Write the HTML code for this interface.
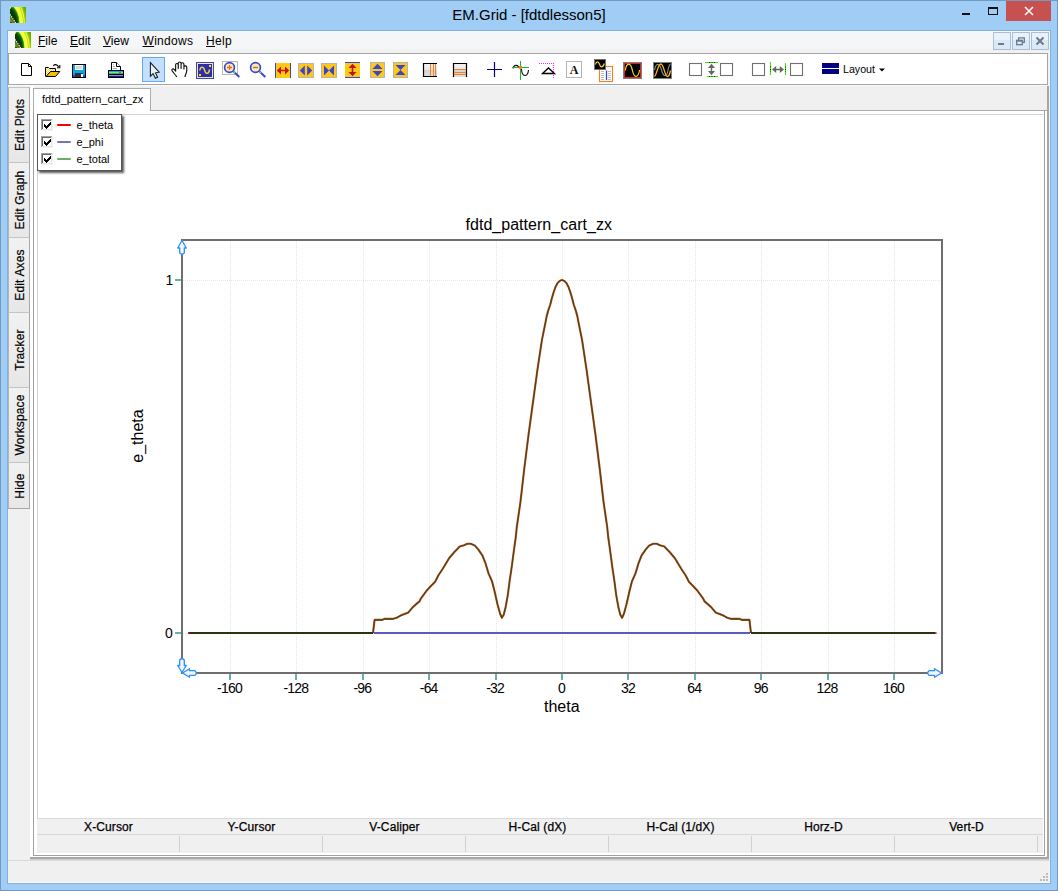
<!DOCTYPE html>
<html><head><meta charset="utf-8"><title>EM.Grid - [fdtdlesson5]</title>
<style>
*{box-sizing:border-box;margin:0;padding:0}
html,body{width:1058px;height:891px;overflow:hidden}
body{position:relative;background:#9fcdf5;font-family:"Liberation Sans",sans-serif;color:#000}
.abs{position:absolute}
#frame{left:0;top:0;width:1058px;height:891px;border:1px solid #7499be}
#client{left:7px;top:30px;width:1044px;height:854px;border:1px solid #84b1dc;background:#f0f0f0;box-shadow:inset -1px -1px 0 #f8f7f5}
#title{left:0;top:5px;width:1058px;text-align:center;font-size:15px;line-height:20px;color:#000}
#menubar{left:8px;top:31px;width:1042px;height:19px;background:linear-gradient(#f5f6f7 0,#f5f6f7 17px,#f0f0f0 19px)}
.mi{position:absolute;top:33px;font-size:12px;line-height:16px;color:#000;white-space:nowrap}
.mi u{text-decoration:underline;text-decoration-thickness:1px;text-underline-offset:.5px}
#toolbar{left:8px;top:53px;width:1040px;height:32px;background:#fff;border:1px solid #a6a6a6}
.ltab{position:absolute;left:8px;width:22px;border:1px solid #a8a8a8;border-top-color:#c4c4c4;border-left-color:#b4b4b4;background:linear-gradient(#f1f1f1,#e7e7e7)}
.ltab span{position:absolute;left:calc(50% + 1px);top:50%;white-space:nowrap;font-size:12px;line-height:14px;transform:translate(-50%,-50%) rotate(-90deg);color:#000;letter-spacing:.15px;-webkit-text-stroke:.2px #000}
#tab{letter-spacing:.05px;left:33px;top:88px;width:118px;height:23px;background:#fff;border:1px solid #acacac;border-bottom:none;font-size:11px;line-height:13px;padding:4px 0 0 8px;white-space:nowrap;color:#000}
#page{left:30px;top:110px;width:1017px;height:747px;background:#fff;box-shadow:inset 0 1px 0 #acacac}
#panel{left:33px;top:110px;width:1012px;height:746px;border:1px solid #a0a0a0;border-top:none}
#inner{left:37px;top:114px;width:1006px;height:704px;border-left:1px solid #d4d4d4;border-top:1px solid #d4d4d4}
#status{left:37px;top:818px;width:1006px;height:35px;background:#f0f0f0;border-top:1px solid #dadada}
#status .h{position:absolute;top:0;height:16px;width:143px;text-align:center;font-size:12px;line-height:16px;color:#000;letter-spacing:.12px;-webkit-text-stroke:.25px #000}
#status .sep{position:absolute;top:17px;height:16px;width:1px;background:#d0d0d0}
#status .ln{position:absolute;left:0;top:15px;width:1006px;height:1px;background:#d8d8d8}
#legend{left:37px;top:114px;width:85px;height:57px;background:#fff;border:1px solid #555;box-shadow:2px 2px 2px rgba(0,0,0,.65)}

.lg{position:absolute;left:38.5px;margin-top:1px;font-size:11px;line-height:13px;color:#000;white-space:nowrap}
.tick{position:absolute;font-size:14px;letter-spacing:-.8px;line-height:14px;color:#000;white-space:nowrap;text-align:center;width:60px}
.big{position:absolute;font-size:16px;line-height:18px;color:#000;white-space:nowrap}
</style></head><body>
<div class="abs" id="frame"></div>
<div class="abs" id="title">EM.Grid - [fdtdlesson5]</div>
<div class="abs" id="client"></div>
<div class="abs" id="menubar"></div>
<div class="mi" style="left:38px"><u>F</u>ile</div>
<div class="mi" style="left:70px"><u>E</u>dit</div>
<div class="mi" style="left:103px"><u>V</u>iew</div>
<div class="mi" style="left:142.5px;letter-spacing:.3px"><u>W</u>indows</div>
<div class="mi" style="left:206px;letter-spacing:.3px"><u>H</u>elp</div>
<div class="abs" id="toolbar"></div>
<!--LEFTTABS--><div class="ltab" style="top:87px;height:76px"><span>Edit Plots</span></div><div class="ltab" style="top:162px;height:76px"><span>Edit Graph</span></div><div class="ltab" style="top:237px;height:76px"><span>Edit Axes</span></div><div class="ltab" style="top:312px;height:76px"><span>Tracker</span></div><div class="ltab" style="top:387px;height:76px"><span>Workspace</span></div><div class="ltab" style="top:462px;height:47px"><span>Hide</span></div><!--/LEFTTABS-->
<div class="abs" id="page"></div><div class="abs" style="left:30px;top:86px;width:4px;height:25px;background:#fff"></div>
<div class="abs" id="panel"></div>
<div class="abs" id="inner"></div>
<div class="abs" id="tab">fdtd_pattern_cart_zx</div>
<div class="abs" id="status">
<div class="ln"></div>
<div class="h" style="left:0">X-Cursor</div><div class="h" style="left:143px">Y-Cursor</div><div class="h" style="left:286px">V-Caliper</div><div class="h" style="left:429px">H-Cal (dX)</div><div class="h" style="left:572px">H-Cal (1/dX)</div><div class="h" style="left:715px">Horz-D</div><div class="h" style="left:858px">Vert-D</div>
<div class="sep" style="left:142px"></div><div class="sep" style="left:285px"></div><div class="sep" style="left:428px"></div><div class="sep" style="left:571px"></div><div class="sep" style="left:714px"></div><div class="sep" style="left:857px"></div><div class="sep" style="left:1000px"></div>
</div>
<!--PLOT--><svg class="abs" style="left:0;top:0" width="1058" height="891" viewBox="0 0 1058 891"><g stroke="#e6e6e6" stroke-width="1" stroke-dasharray="1,1" shape-rendering="crispEdges"><line x1="230.5" y1="241" x2="230.5" y2="672"/><line x1="296.5" y1="241" x2="296.5" y2="672"/><line x1="363.5" y1="241" x2="363.5" y2="672"/><line x1="429.5" y1="241" x2="429.5" y2="672"/><line x1="496.5" y1="241" x2="496.5" y2="672"/><line x1="562.5" y1="241" x2="562.5" y2="672"/><line x1="628.5" y1="241" x2="628.5" y2="672"/><line x1="695.5" y1="241" x2="695.5" y2="672"/><line x1="761.5" y1="241" x2="761.5" y2="672"/><line x1="828.5" y1="241" x2="828.5" y2="672"/><line x1="894.5" y1="241" x2="894.5" y2="672"/><line x1="183" y1="280.5" x2="941" y2="280.5"/><line x1="183" y1="633.5" x2="941" y2="633.5"/></g><g fill="#68b1ab" shape-rendering="crispEdges"><rect x="229" y="674" width="2" height="6"/><rect x="295" y="674" width="2" height="6"/><rect x="362" y="674" width="2" height="6"/><rect x="428" y="674" width="2" height="6"/><rect x="495" y="674" width="2" height="6"/><rect x="561" y="674" width="2" height="6"/><rect x="627" y="674" width="2" height="6"/><rect x="694" y="674" width="2" height="6"/><rect x="760" y="674" width="2" height="6"/><rect x="827" y="674" width="2" height="6"/><rect x="893" y="674" width="2" height="6"/><rect x="175" y="279" width="6" height="2"/><rect x="175" y="632" width="6" height="2"/></g><g fill="#6e6e6e" shape-rendering="crispEdges"><rect x="181" y="239" width="762" height="2"/><rect x="181" y="672" width="762" height="2"/><rect x="181" y="239" width="2" height="435"/><rect x="941" y="239" width="2" height="435"/></g><g fill="none" stroke-linejoin="round" stroke-linecap="butt"><polyline points="374,633 750,633" stroke="#5a5abf" stroke-width="2.2"/><polyline points="373.0,633.0 374.6,619.9 382.5,619.9 384.1,618.9 392.7,618.9 396.6,617.8 401.3,615.2 408.4,612.4 413.1,606.9 419.4,601.4 421.0,598.3 426.5,590.8 431.2,585.7 435.1,581.8 438.3,575.5 442.6,569.0 449.1,558.2 454.2,552.2 459.7,546.6 463.3,545.6 467.3,543.8 470.8,543.8 474.9,545.6 478.4,549.6 482.5,555.7 485.5,563.3 488.5,573.4 492.1,581.5 494.6,591.6 497.6,604.7 500.1,613.8 501.9,617.8 503.7,614.8 505.7,606.7 507.7,595.6 509.7,580.4 511.8,566.3 513.8,551.2 515.8,537.0 516.8,527.0 520.5,501.6 524.3,468.5 528.7,433.5 533.1,401.4 537.5,369.3 541.9,340.1 545.2,323.9 546.7,316.1 548.2,310.6 550.3,304.5 551.8,298.5 553.6,292.4 555.5,287.0 557.6,282.9 559.7,280.9 562.0,279.9 564.3,280.9 566.4,282.9 568.5,287.0 570.4,292.4 572.2,298.5 573.7,304.5 575.8,310.6 577.3,316.1 578.8,323.9 582.1,340.1 586.5,369.3 590.9,401.4 595.3,433.5 599.7,468.5 603.5,501.6 607.2,527.0 608.2,537.0 610.2,551.2 612.2,566.3 614.3,580.4 616.3,595.6 618.3,606.7 620.3,614.8 622.1,617.8 623.9,613.8 626.4,604.7 629.4,591.6 631.9,581.5 635.5,573.4 638.5,563.3 641.5,555.7 645.6,549.6 649.1,545.6 653.2,543.8 656.7,543.8 660.7,545.6 664.3,546.6 669.8,552.2 674.9,558.2 681.4,569.0 685.7,575.5 688.9,581.8 692.8,585.7 697.5,590.8 703.0,598.3 704.6,601.4 710.9,606.9 715.6,612.4 722.7,615.2 727.4,617.8 731.3,618.9 739.9,618.9 741.5,619.9 749.4,619.9 751.0,633.0" stroke="#ff0808" stroke-width="2.1" opacity=".85"/><polyline points="373.0,633.0 374.6,619.9 382.5,619.9 384.1,618.9 392.7,618.9 396.6,617.8 401.3,615.2 408.4,612.4 413.1,606.9 419.4,601.4 421.0,598.3 426.5,590.8 431.2,585.7 435.1,581.8 438.3,575.5 442.6,569.0 449.1,558.2 454.2,552.2 459.7,546.6 463.3,545.6 467.3,543.8 470.8,543.8 474.9,545.6 478.4,549.6 482.5,555.7 485.5,563.3 488.5,573.4 492.1,581.5 494.6,591.6 497.6,604.7 500.1,613.8 501.9,617.8 503.7,614.8 505.7,606.7 507.7,595.6 509.7,580.4 511.8,566.3 513.8,551.2 515.8,537.0 516.8,527.0 520.5,501.6 524.3,468.5 528.7,433.5 533.1,401.4 537.5,369.3 541.9,340.1 545.2,323.9 546.7,316.1 548.2,310.6 550.3,304.5 551.8,298.5 553.6,292.4 555.5,287.0 557.6,282.9 559.7,280.9 562.0,279.9 564.3,280.9 566.4,282.9 568.5,287.0 570.4,292.4 572.2,298.5 573.7,304.5 575.8,310.6 577.3,316.1 578.8,323.9 582.1,340.1 586.5,369.3 590.9,401.4 595.3,433.5 599.7,468.5 603.5,501.6 607.2,527.0 608.2,537.0 610.2,551.2 612.2,566.3 614.3,580.4 616.3,595.6 618.3,606.7 620.3,614.8 622.1,617.8 623.9,613.8 626.4,604.7 629.4,591.6 631.9,581.5 635.5,573.4 638.5,563.3 641.5,555.7 645.6,549.6 649.1,545.6 653.2,543.8 656.7,543.8 660.7,545.6 664.3,546.6 669.8,552.2 674.9,558.2 681.4,569.0 685.7,575.5 688.9,581.8 692.8,585.7 697.5,590.8 703.0,598.3 704.6,601.4 710.9,606.9 715.6,612.4 722.7,615.2 727.4,617.8 731.3,618.9 739.9,618.9 741.5,619.9 749.4,619.9 751.0,633.0" stroke="#0a640a" stroke-width="1.08"/><polyline points="188.5,633.0 373.0,633.0" stroke="#26340f" stroke-width="2.2"/><polyline points="751.0,633.0 935.5,633.0" stroke="#26340f" stroke-width="2.2"/><rect x="188" y="632" width="1.2" height="2" fill="#d02020" stroke="none"/><rect x="935.3" y="632" width="1.2" height="2" fill="#d02020" stroke="none"/></g><g fill="#f4f4f4" stroke="#2b90ff" stroke-width="1.3" stroke-linejoin="round"><path d="M182 240.5 L186.3 248 L184.3 248 L184.3 253 Q182 255.5 179.7 253 L179.7 248 L177.7 248 Z"/><path d="M182 672.5 L186.3 665.5 L184.3 665.5 L184.3 660 Q182 657.5 179.7 660 L179.7 665.5 L177.7 665.5 Z"/><path d="M182.5 673 L189.5 668.7 L189.5 670.7 L195 670.7 Q197.5 673 195 675.3 L189.5 675.3 L189.5 677.3 Z"/><path d="M941.5 673 L934.5 668.7 L934.5 670.7 L929 670.7 Q926.5 673 929 675.3 L934.5 675.3 L934.5 677.3 Z"/></g></svg><div class="tick" style="left:199.5px;top:681px">-160</div><div class="tick" style="left:265.9px;top:681px">-128</div><div class="tick" style="left:332.3px;top:681px">-96</div><div class="tick" style="left:398.7px;top:681px">-64</div><div class="tick" style="left:465.1px;top:681px">-32</div><div class="tick" style="left:531.5px;top:681px">0</div><div class="tick" style="left:597.9px;top:681px">32</div><div class="tick" style="left:664.3px;top:681px">64</div><div class="tick" style="left:730.7px;top:681px">96</div><div class="tick" style="left:797.1px;top:681px">128</div><div class="tick" style="left:863.5px;top:681px">160</div><div class="tick" style="left:139px;top:273px;">1</div><div class="tick" style="left:138.5px;top:626px">0</div><div class="big" style="left:465.5px;top:216px;letter-spacing:.03px">fdtd_pattern_cart_zx</div><div class="big" style="left:544px;top:698px">theta</div><div class="big" style="left:137.5px;top:435.5px;transform:translate(-50%,-50%) rotate(-90deg)">e_theta</div><!--/PLOT-->
<div class="abs" id="legend">

<div class="lg" style="top:3px">e_theta</div><div class="lg" style="top:20px">e_phi</div><div class="lg" style="top:37px">e_total</div>
</div>
<!--ICONS--><svg class="abs" style="left:0;top:0" width="1058" height="891" viewBox="0 0 1058 891">
<defs>
<linearGradient id="gv" x1="0" y1="0" x2="0" y2="1"><stop offset="0" stop-color="#f4f4f4"/><stop offset=".5" stop-color="#e6e6e6"/><stop offset=".5" stop-color="#d4d4d4"/><stop offset="1" stop-color="#e0e0e0"/></linearGradient>
<pattern id="chk" width="2" height="2" patternUnits="userSpaceOnUse"><rect width="2" height="2" fill="#ffd820"/><rect width="1" height="1" fill="#fff"/><rect x="1" y="1" width="1" height="1" fill="#fff"/></pattern>
</defs>
<!-- new -->
<path d="M21.5 63.5H28.5L31.5 66.5V75.5H21.5Z" fill="#fff" stroke="#000"/><path d="M28.5 63.5V66.5H31.5" fill="none" stroke="#000"/>
<!-- open -->
<path d="M45.5 76.5V67.5H48.5L49.5 68.5H55.5V71.5" fill="url(#chk)" stroke="#000"/>
<path d="M46 76.5L50.5 71.5H59.8L55.5 76.5Z" fill="#f5c000" stroke="#000" stroke-linejoin="round"/>
<path d="M53.3 65.8Q55.5 63 58.8 66.8" fill="none" stroke="#000" stroke-width="1.1"/><path d="M59.8 65V67.8H57" fill="none" stroke="#000" stroke-width="1.1"/>
<!-- save -->
<g shape-rendering="crispEdges"><rect x="72" y="64" width="14" height="14" fill="#000"/><rect x="73" y="65" width="12" height="12" fill="#00a8ec"/><rect x="73" y="75" width="12" height="2" fill="#3c3cd8"/><rect x="75" y="65" width="8" height="5" fill="#fff"/><rect x="76" y="66" width="6" height="3" fill="#d8d8d8"/><rect x="75" y="73" width="8" height="4" fill="#303030"/><rect x="81" y="74" width="2" height="3" fill="#fff"/><rect x="84" y="65" width="1" height="1" fill="#888"/></g>
<!-- print -->
<path d="M111.5 70.5V62.5H116.5L120.5 66.5V70.5" fill="#fff" stroke="#000"/><path d="M116.5 62.5V66.5H120.5" fill="#fff" stroke="#000"/>
<g stroke="#aaa" stroke-width="1"><path d="M113 64.5h1M113 66.5h2M113 68.5h4"/></g>
<g shape-rendering="crispEdges"><rect x="108" y="70" width="16" height="8" rx="1" fill="#000"/><rect x="109" y="71" width="14" height="1" fill="#00b0e8"/><rect x="109" y="72" width="14" height="1" fill="#b4e400"/><rect x="119" y="72" width="2" height="1" fill="#f03020"/><rect x="121" y="72" width="2" height="1" fill="#ffc000"/><rect x="109" y="73" width="14" height="1" fill="#00b0e8"/><rect x="109" y="75" width="14" height="1" fill="#6a9ae8"/><rect x="109" y="76" width="14" height="1" fill="#1818a8"/></g>
<!-- select highlight + pointer -->
<rect x="142.5" y="57.5" width="22" height="24" fill="#c3e0fe" stroke="#64a7ea"/>
<path d="M150.4 62.6V76.2L153.1 73.6L155.4 78.2L157.6 77.2L155.5 72.8L159.2 72.2Z" fill="#e8f2fd" stroke="#1a1a1a" stroke-width="1.05" stroke-linejoin="miter"/>
<!-- hand -->
<path transform="translate(180 0) scale(1.09 1) translate(-180 0)" d="M176.8 76.6C175.5 74 173.5 72.5 172.6 70.5C172.2 69 173.8 68.3 174.8 69.6L176 71.2V64.8C176 63 178.2 63 178.4 64.8V68.5V63.2C178.6 61.6 180.8 61.6 181 63.2V68.5V63.8C181.3 62.3 183.4 62.5 183.6 64V69V66.8C184 65.4 186.2 65.6 186.2 67.2V70.5C186.2 73 184.8 74.5 184.6 76.6" fill="#fff" stroke="#111" stroke-width="1.05" stroke-linejoin="round" stroke-linecap="round"/>
<!-- sine box -->
<g shape-rendering="crispEdges"><rect x="196" y="62" width="18" height="17" fill="#3a44c4"/><rect x="197" y="63" width="16" height="15" fill="#f4e8a8"/><rect x="198" y="64" width="14" height="13" fill="#2a30a8"/><rect x="209" y="65" width="2" height="2" fill="#ffd830"/><rect x="199" y="74" width="2" height="2" fill="#ffd830"/></g>
<path d="M199.8 70.5C200.5 66 203.5 66 204.6 70.2C205.6 74.5 208.6 74.5 209.6 69.5" fill="none" stroke="#ffd830" stroke-width="1.4"/>
<!-- zoom in -->
<rect x="222.5" y="61.5" width="15" height="13" fill="#fff" stroke="#b8b8b8"/>
<path d="M233 71L239.3 77" stroke="#3a48d0" stroke-width="2"/><path d="M233 71L235 73" stroke="#9ad020" stroke-width="1.6"/>
<circle cx="229.5" cy="67.5" r="4.9" fill="#f6ecc0" stroke="#3a48d0" stroke-width="1.7"/>
<path d="M227 67.5H232M229.5 65V70" stroke="#f06a10" stroke-width="1.3"/>
<!-- zoom out -->
<path d="M259 71L265.3 77" stroke="#3a48d0" stroke-width="2"/><path d="M259 71L261 73" stroke="#9ad020" stroke-width="1.6"/>
<circle cx="255.5" cy="67.5" r="4.9" fill="#f6ecc0" stroke="#3a48d0" stroke-width="1.7"/>
<path d="M253 67.5H258" stroke="#f06a10" stroke-width="1.5"/>
<!-- yellow arrow icons -->
<g shape-rendering="crispEdges"><rect x="275" y="63" width="16" height="15" fill="#ffc814"/><rect x="275" y="63" width="1" height="15" fill="#3a44d0"/><rect x="290" y="63" width="1" height="15" fill="#3a44d0"/>
<rect x="298" y="63" width="16" height="15" fill="#b4b4b4"/><rect x="299" y="64" width="14" height="13" fill="#ffc814"/>
<rect x="321" y="63" width="16" height="15" fill="#b4b4b4"/><rect x="322" y="64" width="14" height="13" fill="#ffc814"/>
<rect x="345" y="62" width="15" height="16" fill="#ffc814"/><rect x="345" y="62" width="15" height="1" fill="#3a44d0"/><rect x="345" y="77" width="15" height="1" fill="#3a44d0"/>
<rect x="370" y="62" width="15" height="16" fill="#b4b4b4"/><rect x="371" y="63" width="13" height="14" fill="#ffc814"/>
<rect x="393" y="62" width="15" height="16" fill="#b4b4b4"/><rect x="394" y="63" width="13" height="14" fill="#ffc814"/></g>
<path d="M276.8 70.5L281 66.5V69.7H285V66.5L289.2 70.5L285 74.5V71.3H281V74.5Z" fill="#c41414"/>
<path d="M299.8 70.5L304.8 65.5V75.5ZM312.2 70.5L307.2 65.5V75.5Z" fill="#3a44d0"/>
<path d="M324 65.5L329 70.5L324 75.5ZM334 65.5L329 70.5L334 75.5Z" fill="#3a44d0"/>
<path d="M352.5 63.8L356.5 68H353.3V72H356.5L352.5 76.2L348.5 72H351.7V68H348.5Z" fill="#c41414"/>
<path d="M377.5 63.8L382.5 69H372.5ZM377.5 76.2L382.5 71H372.5Z" fill="#3a44d0"/>
<path d="M395.5 65H405.5L400.5 70ZM395.5 75H405.5L400.5 70Z" fill="#3a44d0"/>
<!-- v-lines icon -->
<rect x="423" y="63" width="14" height="14" fill="url(#gv)"/><path d="M437 63.5H423.5V76.5H437" fill="none" stroke="#000" stroke-width="1.2"/>
<path d="M430.5 64V76M433.5 64V76M435.5 64V76" stroke="#f58020" stroke-width="1"/>
<!-- h-lines icon -->
<rect x="453" y="63" width="14" height="14" fill="url(#gv)"/><path d="M453.5 77V63.5H466.5V77" fill="none" stroke="#000" stroke-width="1.2"/>
<g fill="#f58020" shape-rendering="crispEdges"><rect x="454" y="69" width="12" height="1"/><rect x="454" y="72" width="12" height="1"/><rect x="454" y="74" width="12" height="1"/></g>
<!-- cross -->
<path d="M487 69.5H502M494.5 62V77" stroke="#000080" stroke-width="1.2"/>
<!-- cursor on sine -->
<path d="M513 68.5C514 64.5 517.5 64.5 519 67.5" fill="none" stroke="#111" stroke-width="1.1"/><path d="M521.5 69C521.8 77.5 528 77.5 528.5 70" fill="none" stroke="#111" stroke-width="1.1"/>
<path d="M512 67.5H529M520.5 61V80" stroke="#20b040" stroke-width="1.1"/><rect x="519" y="66" width="3" height="3" fill="#f58020"/>
<!-- magenta dotted + triangle -->
<path d="M539 63.5H554" stroke="#ff20ff" stroke-width="1.2" stroke-dasharray="1,1"/><path d="M553.5 63V78" stroke="#ff20ff" stroke-width="1.2" stroke-dasharray="1,1"/>
<path d="M542.5 73.5L548.5 68L554.5 73.5Z" fill="#fff" stroke="#000" stroke-width="1.3"/>
<!-- A box -->
<rect x="566.5" y="61.5" width="15" height="16" fill="#fff" stroke="#b4b4b4"/>
<text x="574" y="73.6" text-anchor="middle" font-family="Liberation Serif,serif" font-weight="bold" font-size="12" fill="#111">A</text>
<!-- sine + doc -->
<rect x="599.5" y="66.5" width="13" height="15" fill="#fff" stroke="#f58020" stroke-width="1.1"/>
<path d="M601 71.5h3M601 73.5h3M601 75.5h3M601 77.5h3M601 79.5h3M608 71.5h3M608 73.5h3M608 75.5h3M608 77.5h3M608 79.5h3" stroke="#bdbdbd"/><path d="M606.5 70.5V80" stroke="#3a44d0" stroke-width="1.3"/>
<rect x="594.5" y="59.5" width="11" height="10" fill="#000" stroke="#707070"/>
<path d="M595.5 64.5C596.2 61 598.5 61 599.5 64.2C600.4 67.8 603 68 604.3 63.5" fill="none" stroke="#ffd820" stroke-width="1.2"/>
<!-- red box sine -->
<rect x="623.5" y="62.5" width="18" height="16" fill="#000" stroke="#808080"/><rect x="624.5" y="63.5" width="16" height="14" fill="none" stroke="#e02020"/>
<path d="M625.3 70.5C626.5 62 630.5 62 632.3 70C634 78.5 638 78.5 639.6 70" fill="none" stroke="#f0e020" stroke-width="1.2"/>
<!-- double sine -->
<rect x="653.5" y="62.5" width="18" height="16" fill="#000" stroke="#808080"/>
<path d="M654.5 70C656 62.5 659.5 62.5 661.5 70C663.5 77.5 667 77.5 668 70C668.8 66 669.8 64.5 670.5 64" fill="none" stroke="#8c8c8c" stroke-width="1.1"/>
<path d="M654.5 76.5C657 74 658 64 660.8 64C664 64 664.5 76.5 667.5 76.5C669 76.5 670 73 670.5 70.5" fill="none" stroke="#ffb818" stroke-width="1.3"/>
<!-- squares and arrows -->
<g fill="#fff" stroke="#707070" stroke-width="1.1"><rect x="689.5" y="63.5" width="12" height="12"/><rect x="720.5" y="63.5" width="12" height="12"/><rect x="752.5" y="63.5" width="12" height="12"/><rect x="790.5" y="63.5" width="12" height="12"/></g>
<path d="M705 62.5H718M707 76.5H718" stroke="#38e800" stroke-width="1.1"/><path d="M709 62.5H715M709 76.5H715" stroke="#203020" stroke-width="1.1" stroke-dasharray="1,1.5"/>
<path d="M711.5 63.8L715 68H712.2V71H715L711.5 75.2L708 71H710.8V68H708Z" fill="#666"/>
<path d="M770.5 62V75M785.5 63V75" stroke="#38e800" stroke-width="1.1"/><path d="M770.5 66.5V72M785.5 66.5V72" stroke="#203020" stroke-width="1.1" stroke-dasharray="1,1.5"/>
<path d="M772 69.5L776.2 66V68.8H779.8V66L784 69.5L779.8 73V70.2H776.2V73Z" fill="#666"/>
<!-- layout -->
<g shape-rendering="crispEdges"><rect x="822" y="63" width="17" height="5" fill="#000080"/><rect x="822" y="69" width="17" height="5" fill="#000080"/></g>
<text x="843" y="72.7" font-family="Liberation Sans,sans-serif" font-size="11" fill="#000" textLength="32" lengthAdjust="spacingAndGlyphs">Layout</text>
<path d="M879 68.5H885L882 71.5Z" fill="#000"/>
<!-- window controls -->
<g shape-rendering="crispEdges"><rect x="1006" y="1" width="45" height="20" fill="#c75050"/><rect x="962" y="13" width="8" height="2" fill="#111"/><rect x="988" y="7" width="10" height="8" fill="none"/><path d="M988.5 8V14.5H997.5V8" fill="none" stroke="#111"/><rect x="988" y="7" width="10" height="2" fill="#111"/></g>
<path d="M1025 7L1033 15M1033 7L1025 15" stroke="#fff" stroke-width="1.5"/>
<!-- mdi buttons -->
<g fill="#dbe8f5" stroke="#a9bfd6"><rect x="993.5" y="32.5" width="17" height="17"/><rect x="1012.5" y="32.5" width="17" height="17"/><rect x="1031.5" y="32.5" width="17" height="17"/></g>
<g fill="#e9f1fa"><rect x="994" y="33" width="16" height="7"/><rect x="1013" y="33" width="16" height="7"/><rect x="1032" y="33" width="16" height="7"/></g>
<rect x="998" y="43" width="6" height="2" fill="#6a7b8f"/>
<g fill="none" stroke="#6a7b8f" stroke-width="1.3"><path d="M1018.7 40V37.8H1024.3V42.3H1022"/><rect x="1016.7" y="40.3" width="5.6" height="4.4"/><path d="M1016.7 41H1022.3"/></g>
<path d="M1036.5 37.5L1043.5 44.5M1043.5 37.5L1036.5 44.5" stroke="#6a7b8f" stroke-width="2"/>
<!-- resize grip -->
<g fill="#bcbcbc" shape-rendering="crispEdges"><rect x="1046" y="873" width="2" height="2"/><rect x="1043" y="876" width="2" height="2"/><rect x="1046" y="876" width="2" height="2"/><rect x="1040" y="879" width="2" height="2"/><rect x="1043" y="879" width="2" height="2"/><rect x="1046" y="879" width="2" height="2"/></g>
</svg>
<!--/ICONS-->
<!--EXTRA--><svg class="abs" style="left:0;top:0" width="1058" height="891" viewBox="0 0 1058 891">
<defs>
<radialGradient id="ig" gradientUnits="userSpaceOnUse" cx="-4" cy="16" r="22" gradientTransform="translate(-4 16) scale(1 1.45) translate(4 -16)"><stop offset="0" stop-color="#062c06"/><stop offset=".46" stop-color="#083a08"/><stop offset=".55" stop-color="#116a10"/><stop offset=".595" stop-color="#48b010"/><stop offset=".625" stop-color="#f0ff38"/><stop offset=".74" stop-color="#ffff48"/><stop offset=".79" stop-color="#b4e010"/><stop offset=".83" stop-color="#e8ff50"/><stop offset=".87" stop-color="#9cd000"/><stop offset=".93" stop-color="#78b400"/><stop offset="1" stop-color="#6aa400"/></radialGradient>
</defs>
<g transform="translate(10 7)"><rect width="16" height="16" fill="url(#ig)"/><path d="M0 7.6L5.6 16H0Z" fill="#5e7c0c"/><path d="M0 11L3 16H0Z" fill="#8a9a18" opacity=".7"/><path d="M0 15H2V16H0Z" fill="#4a3a3a"/><path d="M0 7.4L5.7 15.9" stroke="#fff" stroke-width="1.1" stroke-dasharray="1.3,1" opacity=".95"/><path d="M0 0H1.6L0 2.4Z" fill="#e8ff40"/></g><g transform="translate(15 32)"><rect width="16" height="16" fill="url(#ig)"/><path d="M0 7.6L5.6 16H0Z" fill="#5e7c0c"/><path d="M0 11L3 16H0Z" fill="#8a9a18" opacity=".7"/><path d="M0 15H2V16H0Z" fill="#4a3a3a"/><path d="M0 7.4L5.7 15.9" stroke="#fff" stroke-width="1.1" stroke-dasharray="1.3,1" opacity=".95"/><path d="M0 0H1.6L0 2.4Z" fill="#e8ff40"/></g>
<g shape-rendering="crispEdges"><rect x="1047" y="86" width="2" height="773" fill="#a6a6a6"/><rect x="30" y="857" width="1019" height="2" fill="#a6a6a6"/><rect x="30" y="859" width="1019" height="1" fill="#cfcfcf"/><rect x="8" y="860" width="1042" height="1" fill="#d9d9d9"/><rect x="8" y="85" width="1039" height="1" fill="#fafafa"/></g>
<g stroke-width="2" stroke-linecap="round"><path d="M58 125H70" stroke="#ff0000"/><path d="M58 142H70" stroke="#7474ba"/><path d="M58 159H70" stroke="#68ae68"/></g>
<g shape-rendering="crispEdges"><rect x="41" y="119" width="12" height="12" fill="#fff"/><rect x="41" y="119" width="12" height="1" fill="#a0a0a0"/><rect x="41" y="119" width="1" height="12" fill="#a0a0a0"/><rect x="42" y="120" width="10" height="1" fill="#696969"/><rect x="42" y="120" width="1" height="10" fill="#696969"/><rect x="42" y="129" width="10" height="1" fill="#e3e3e3"/><rect x="51" y="120" width="1" height="10" fill="#e3e3e3"/><rect x="41" y="130" width="12" height="1" fill="#f4f4f4"/><rect x="52" y="119" width="1" height="12" fill="#f4f4f4"/><rect x="44" y="124" width="1" height="3" fill="#000"/><rect x="45" y="125" width="1" height="3" fill="#000"/><rect x="46" y="126" width="1" height="3" fill="#000"/><rect x="47" y="125" width="1" height="3" fill="#000"/><rect x="48" y="124" width="1" height="3" fill="#000"/><rect x="49" y="123" width="1" height="3" fill="#000"/><rect x="50" y="122" width="1" height="3" fill="#000"/><rect x="41" y="136" width="12" height="12" fill="#fff"/><rect x="41" y="136" width="12" height="1" fill="#a0a0a0"/><rect x="41" y="136" width="1" height="12" fill="#a0a0a0"/><rect x="42" y="137" width="10" height="1" fill="#696969"/><rect x="42" y="137" width="1" height="10" fill="#696969"/><rect x="42" y="146" width="10" height="1" fill="#e3e3e3"/><rect x="51" y="137" width="1" height="10" fill="#e3e3e3"/><rect x="41" y="147" width="12" height="1" fill="#f4f4f4"/><rect x="52" y="136" width="1" height="12" fill="#f4f4f4"/><rect x="44" y="141" width="1" height="3" fill="#000"/><rect x="45" y="142" width="1" height="3" fill="#000"/><rect x="46" y="143" width="1" height="3" fill="#000"/><rect x="47" y="142" width="1" height="3" fill="#000"/><rect x="48" y="141" width="1" height="3" fill="#000"/><rect x="49" y="140" width="1" height="3" fill="#000"/><rect x="50" y="139" width="1" height="3" fill="#000"/><rect x="41" y="153" width="12" height="12" fill="#fff"/><rect x="41" y="153" width="12" height="1" fill="#a0a0a0"/><rect x="41" y="153" width="1" height="12" fill="#a0a0a0"/><rect x="42" y="154" width="10" height="1" fill="#696969"/><rect x="42" y="154" width="1" height="10" fill="#696969"/><rect x="42" y="163" width="10" height="1" fill="#e3e3e3"/><rect x="51" y="154" width="1" height="10" fill="#e3e3e3"/><rect x="41" y="164" width="12" height="1" fill="#f4f4f4"/><rect x="52" y="153" width="1" height="12" fill="#f4f4f4"/><rect x="44" y="158" width="1" height="3" fill="#000"/><rect x="45" y="159" width="1" height="3" fill="#000"/><rect x="46" y="160" width="1" height="3" fill="#000"/><rect x="47" y="159" width="1" height="3" fill="#000"/><rect x="48" y="158" width="1" height="3" fill="#000"/><rect x="49" y="157" width="1" height="3" fill="#000"/><rect x="50" y="156" width="1" height="3" fill="#000"/></g>
</svg><!--/EXTRA-->
</body></html>
